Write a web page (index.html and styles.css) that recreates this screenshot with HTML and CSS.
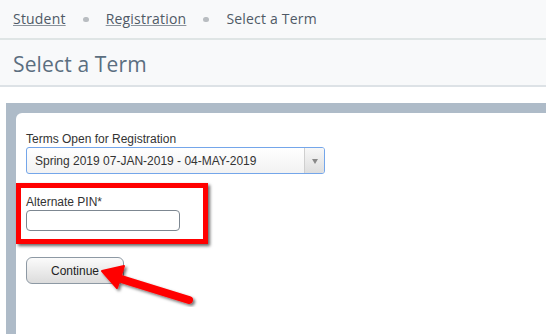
FILE: index.html
```html
<!DOCTYPE html>
<html>
<head>
<meta charset="utf-8">
<link rel="stylesheet" href="styles.css">
</head>
<body>
<nav class="crumbs">
  <a class="crumb-link" href="#">Student</a>
  <span class="dot"></span>
  <a class="crumb-link" href="#">Registration</a>
  <span class="dot"></span>
  <span class="crumb-current">Select a Term</span>
</nav>
<header class="title-bar">
  <h1 class="title">Select a Term</h1>
</header>
<main class="frame">
  <section class="card">
    <label class="field-label">Terms Open for Registration</label>
    <div class="select">
      <span class="select-text">Spring 2019 07-JAN-2019 - 04-MAY-2019</span>
      <span class="select-btn"><span class="caret"></span></span>
    </div>
    <div class="highlight">
      <label class="field-label">Alternate PIN*</label>
      <div class="input"></div>
    </div>
    <button class="btn">Continue</button>
  </section>
</main>
<svg class="arrow" width="546" height="334" viewBox="0 0 546 334">
  <defs>
    <filter id="sh" x="-20%" y="-20%" width="140%" height="140%">
      <feDropShadow dx="2" dy="2" stdDeviation="1.5" flood-color="#000" flood-opacity="0.55"/>
    </filter>
  </defs>
  <g filter="url(#sh)">
    <line x1="118" y1="278" x2="189" y2="300" stroke="#ff0000" stroke-width="8" stroke-linecap="round"/>
    <polygon points="102,271 124,266 117,288" fill="#ff0000" stroke="#ff0000" stroke-width="2" stroke-linejoin="round"/>
  </g>
</svg>
</body>
</html>
```

FILE: styles.css
```css
html, body {
  margin: 0;
  padding: 0;
  height: 100%;
  overflow: hidden;
}
body {
  display: flex;
  flex-direction: column;
  background: #ffffff;
  font-family: "Open Sans", "Liberation Sans", sans-serif;
  position: relative;
}
.crumbs {
  height: 38px;
  line-height: 38px;
  background: #f8f9fa;
  border-bottom: 2px solid #dfe5e5;
  padding: 0 13px;
  font-size: 14px;
  letter-spacing: 0.2px;
  color: #4f5a66;
  display: flex;
  align-items: center;
  flex-shrink: 0;
}
.crumb-link {
  color: #4f5a66;
  text-decoration: underline;
  text-decoration-color: #8a939c;
}
.crumb-current {
  color: #4f5a66;
}
.dot {
  width: 6px;
  height: 5px;
  border-radius: 3px;
  background: #b9bdc1;
  margin: 1px 17px 0 17px;
}
.title-bar {
  background: #f8f9fa;
  border-bottom: 2px solid #dde2e6;
  padding: 0 13px;
  box-sizing: border-box;
  height: 47px;
  flex-shrink: 0;
}
.title {
  margin: 0;
  font-weight: normal;
  font-size: 21px;
  letter-spacing: 0.15px;
  line-height: 48px;
  color: #5b6e80;
}
.frame {
  margin: 16px 0 0 6px;
  padding: 10px 0 0 10px;
  background: #aebbc8;
  flex: 1;
  display: flex;
}
.card {
  flex: 1;
  background: #ffffff;
  border-radius: 6px 0 0 0;
  padding: 19px 0 0 10px;
  font-family: "Liberation Sans", Arial, sans-serif;
  font-size: 12px;
  color: #333333;
}
.field-label {
  display: block;
  line-height: 14px;
}
.select {
  margin-top: 1px;
  width: 299px;
  height: 27px;
  box-sizing: border-box;
  border: 1px solid #74a6ea;
  border-radius: 3px;
  background: linear-gradient(#ffffff, #f2f2f2);
  display: flex;
  align-items: center;
  overflow: hidden;
}
.select-text {
  flex: 1;
  padding-left: 8px;
  color: #333333;
}
.select-btn {
  width: 19px;
  height: 100%;
  border-left: 1px solid #cfcfcf;
  background: linear-gradient(#f7f7f7, #dedede);
  display: flex;
  align-items: center;
  justify-content: center;
}
.caret {
  width: 0;
  height: 0;
  border-left: 3.5px solid transparent;
  border-right: 3.5px solid transparent;
  border-top: 5px solid #888888;
  margin-top: 1px;
}
.highlight {
  margin: 9px 0 0 -10px;
  width: 192px;
  box-sizing: border-box;
  border: 5px solid #ff0000;
  padding: 7px 5px 8px 5px;
  box-shadow: 2px 2px 3px rgba(0, 0, 0, 0.6);
}
.input {
  margin-top: 1px;
  width: 154px;
  height: 21px;
  box-sizing: border-box;
  border: 1px solid #7d8791;
  border-radius: 4px;
  background: #ffffff;
}
.btn {
  display: block;
  margin-top: 13px;
  width: 98px;
  height: 27px;
  border: 1px solid #8d99a4;
  border-radius: 6px;
  background: linear-gradient(#fbfbfb, #dcdcdc);
  font-family: "Liberation Sans", Arial, sans-serif;
  font-size: 12px;
  color: #222222;
  padding: 0;
}
.arrow {
  position: absolute;
  left: 0;
  top: 0;
  pointer-events: none;
}
```
